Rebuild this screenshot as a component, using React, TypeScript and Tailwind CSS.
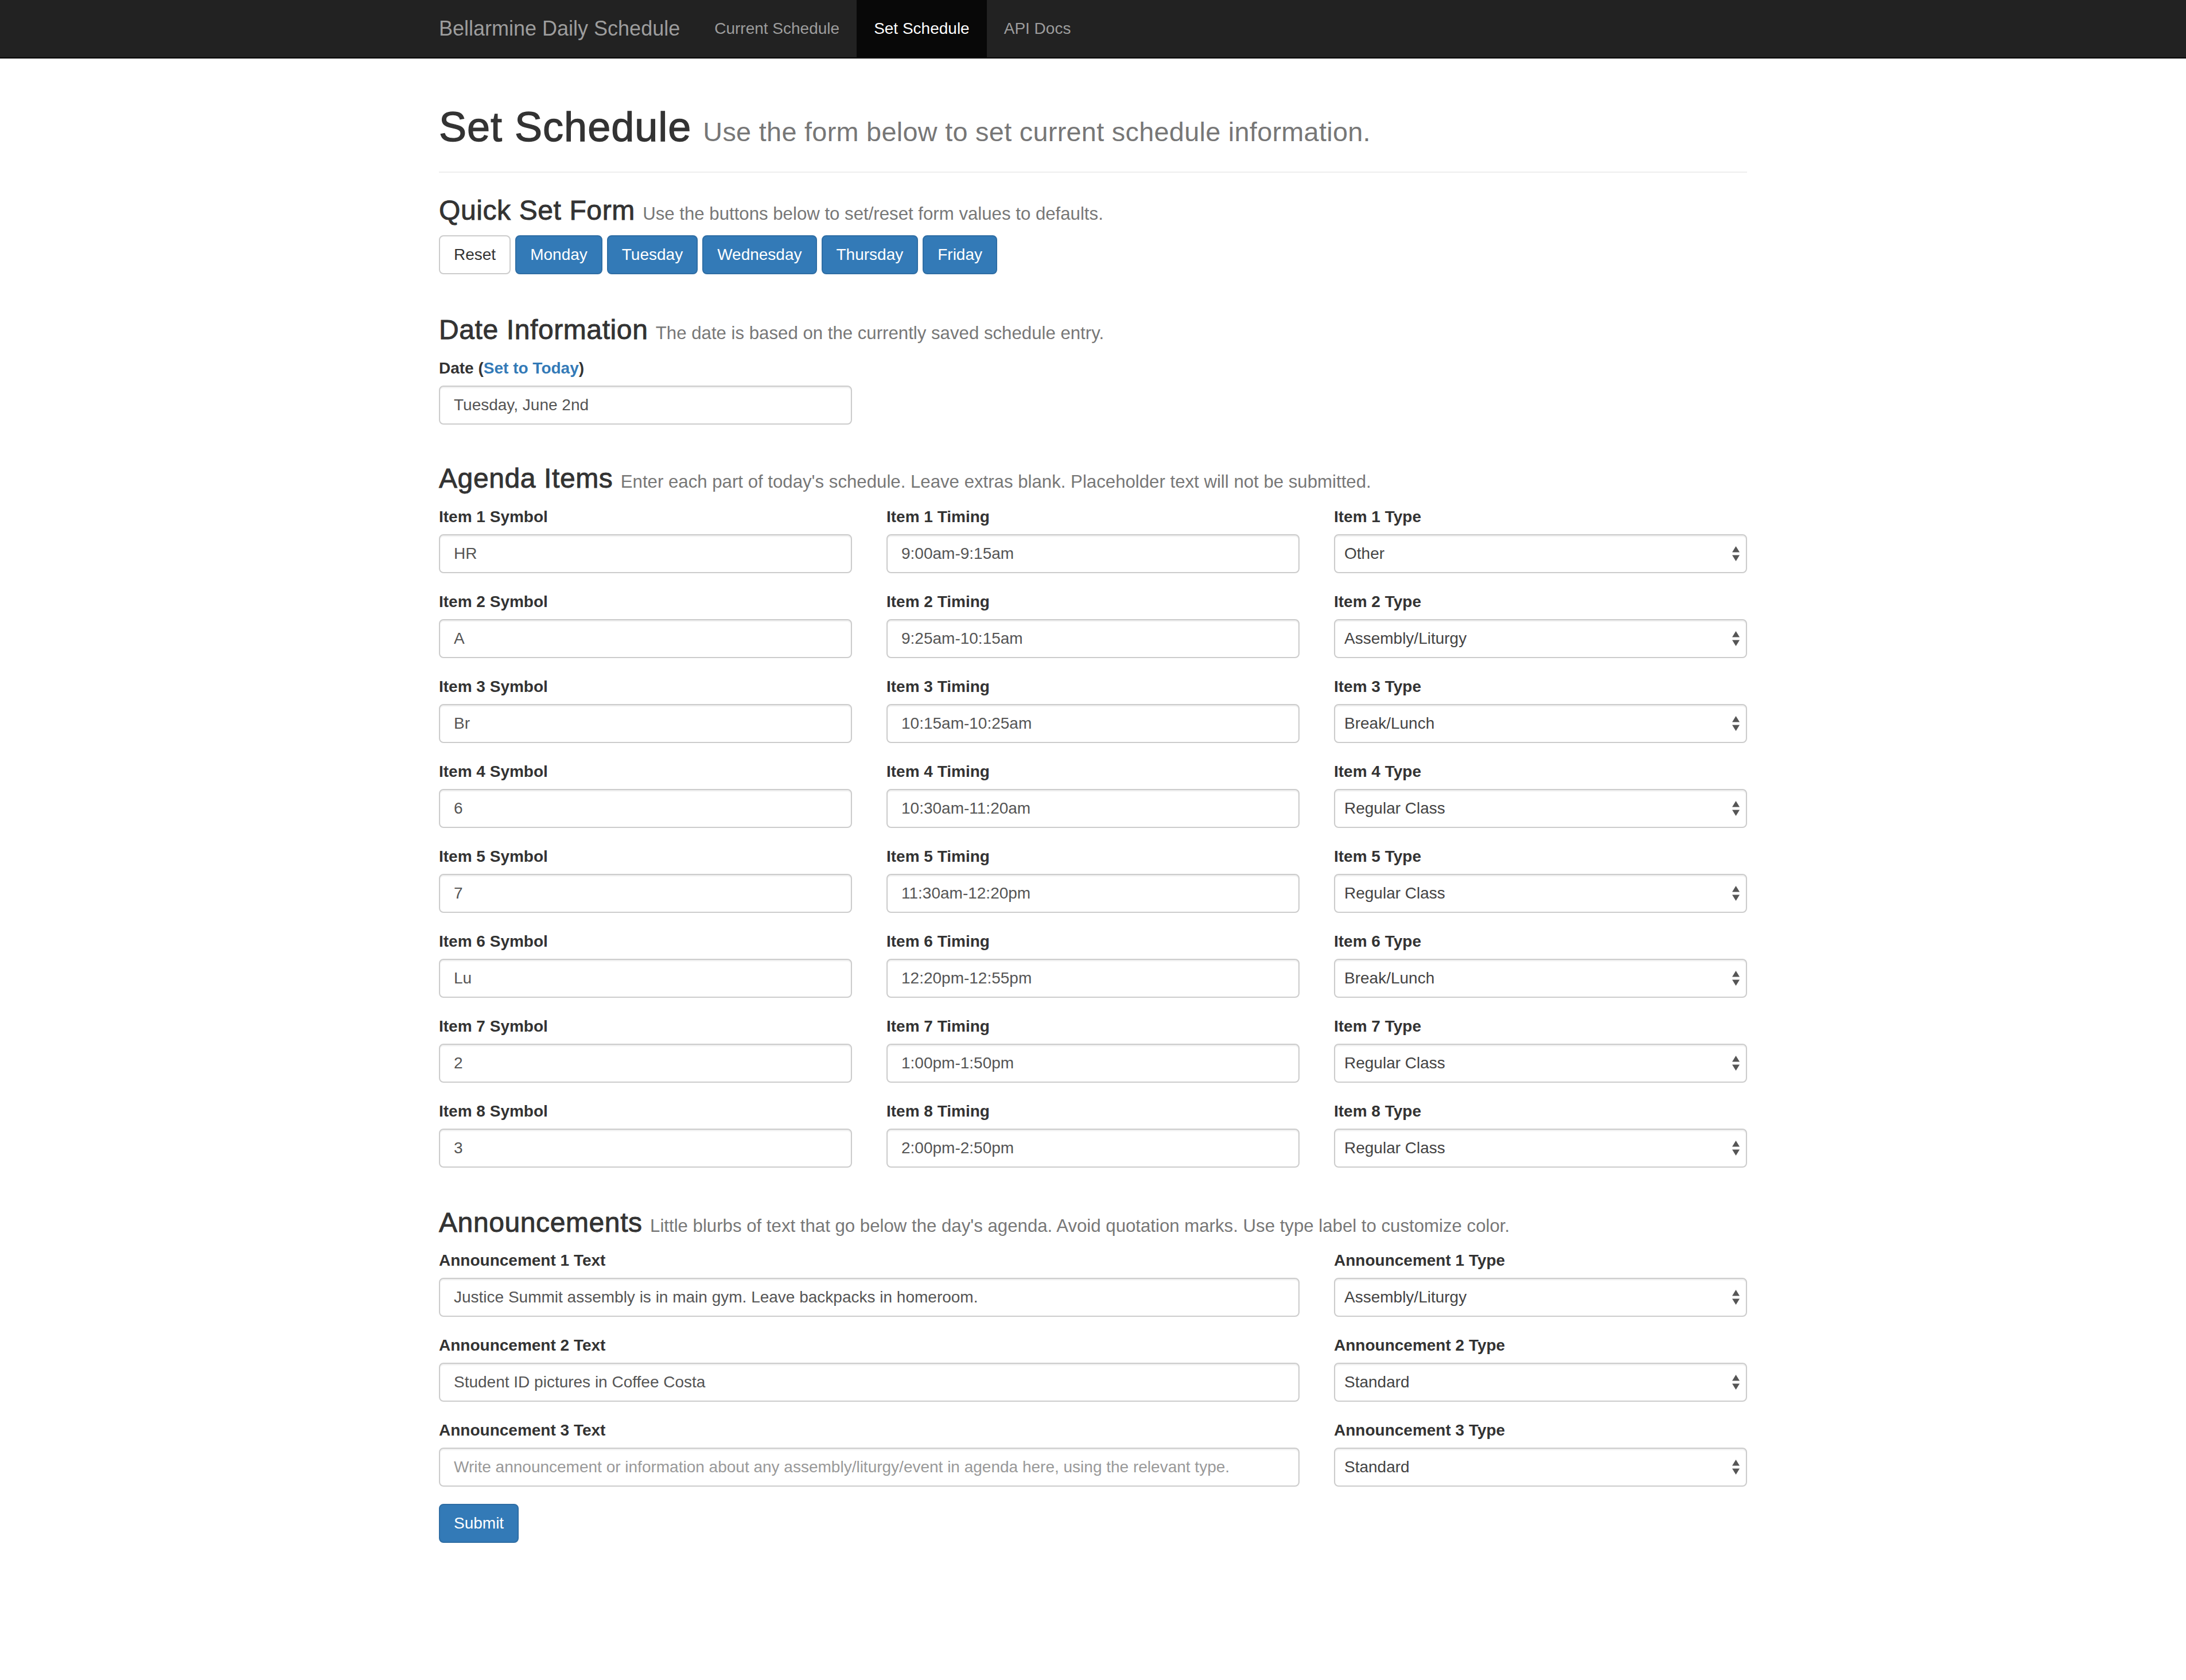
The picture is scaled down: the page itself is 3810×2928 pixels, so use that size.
import React from 'react';

const agendaItems = [
  { symbol: 'HR', timing: '9:00am-9:15am', type: 'Other' },
  { symbol: 'A', timing: '9:25am-10:15am', type: 'Assembly/Liturgy' },
  { symbol: 'Br', timing: '10:15am-10:25am', type: 'Break/Lunch' },
  { symbol: '6', timing: '10:30am-11:20am', type: 'Regular Class' },
  { symbol: '7', timing: '11:30am-12:20pm', type: 'Regular Class' },
  { symbol: 'Lu', timing: '12:20pm-12:55pm', type: 'Break/Lunch' },
  { symbol: '2', timing: '1:00pm-1:50pm', type: 'Regular Class' },
  { symbol: '3', timing: '2:00pm-2:50pm', type: 'Regular Class' },
];

const itemTypes = ['Regular Class', 'Break/Lunch', 'Assembly/Liturgy', 'Other'];
const announcementTypes = ['Standard', 'Assembly/Liturgy', 'Break/Lunch', 'Other'];

const announcements = [
  { text: 'Justice Summit assembly is in main gym. Leave backpacks in homeroom.', type: 'Assembly/Liturgy' },
  { text: 'Student ID pictures in Coffee Costa', type: 'Standard' },
  { text: '', type: 'Standard' },
];

const inputClass =
  'block w-full h-[68px] px-[24px] py-[12px] text-[28px] leading-[40px] text-[#555] bg-white border-2 border-[#ccc] rounded-[8px] shadow-[inset_0_2px_2px_rgba(0,0,0,0.075)] outline-none placeholder:text-[#999]';

const FieldLabel: React.FC<{ children: React.ReactNode }> = ({ children }) => (
  <label className="block mb-[10px] text-[28px] leading-[40px] font-bold text-[#333]">{children}</label>
);

const TextField: React.FC<{ label: React.ReactNode; value?: string; placeholder?: string }> = ({
  label,
  value,
  placeholder,
}) => (
  <div className="mb-[30px]">
    <FieldLabel>{label}</FieldLabel>
    <input type="text" defaultValue={value} placeholder={placeholder} className={inputClass} />
  </div>
);

const SelectField: React.FC<{ label: string; value: string; options: string[] }> = ({ label, value, options }) => (
  <div className="mb-[30px]">
    <FieldLabel>{label}</FieldLabel>
    <div className="relative">
      <select
        defaultValue={value}
        className="block w-full h-[68px] pl-[16px] pr-[40px] text-[28px] leading-[40px] text-[#444] bg-white border-2 border-[#ccc] rounded-[8px] shadow-[inset_0_2px_2px_rgba(0,0,0,0.075)] appearance-none outline-none"
      >
        {options.map(o => (
          <option key={o}>{o}</option>
        ))}
      </select>
      {/* up/down arrows */}
      <svg
        className="absolute right-[13px] top-1/2 -translate-y-1/2 pointer-events-none"
        width="13"
        height="26"
        viewBox="0 0 13 26"
      >
        <polygon points="0,10.5 6.5,0 13,10.5" fill="#555" />
        <polygon points="0,15.5 13,15.5 6.5,26" fill="#555" />
      </svg>
    </div>
  </div>
);

const SectionTitle: React.FC<{ title: string; note: string; className?: string }> = ({ title, note, className }) => (
  <h3 className={`text-[48px] leading-[1.1] font-medium text-[#333] mb-[20px] ${className ?? ''}`}>
    <span className="tracking-[0.6px] [-webkit-text-stroke:0.9px_#333]">{title}</span>{' '}
    <small className="text-[31.2px] leading-none font-normal text-[#777]">{note}</small>
  </h3>
);

export default function App() {
  const navLinks = [
    { label: 'Current Schedule', active: false },
    { label: 'Set Schedule', active: true },
    { label: 'API Docs', active: false },
  ];

  return (
    <div className="min-h-screen bg-white text-[28px] leading-[40px] text-[#333] font-['Liberation_Sans','Helvetica_Neue',Arial,sans-serif]">
      {/* Navbar */}
      <nav className="h-[102px] bg-[#222] border-b-2 border-[#080808]">
        <div className="mx-auto w-[2340px] px-[30px] flex h-[100px]">
          <a className="-ml-[30px] px-[30px] py-[30px] h-[100px] text-[36px] leading-[40px] text-[#9d9d9d]">
            Bellarmine Daily Schedule
          </a>
          <ul className="flex">
            {navLinks.map(link => (
              <li key={link.label}>
                <a
                  className={`block px-[30px] py-[30px] text-[28px] leading-[40px] ${
                    link.active ? 'bg-[#080808] text-white' : 'text-[#9d9d9d]'
                  }`}
                >
                  {link.label}
                </a>
              </li>
            ))}
          </ul>
        </div>
      </nav>

      <main className="mx-auto w-[2340px] px-[30px] flex flex-col">
        {/* Page header */}
        <div className="mt-[80px] pb-[18px] border-b-2 border-[#eee]">
          <h1 className="text-[72px] leading-[1.1] font-medium text-[#333] mb-[20px]">
            <span className="tracking-[1px] [-webkit-text-stroke:1.3px_#333]">Set Schedule</span>{' '}
            <small className="text-[46.8px] leading-none font-normal text-[#777] tracking-[0.3px]">
              Use the form below to set current schedule information.
            </small>
          </h1>
        </div>

        {/* Quick set */}
        <SectionTitle
          className="mt-[40px] !mb-[16px]"
          title="Quick Set Form"
          note="Use the buttons below to set/reset form values to defaults."
        />
        <div className="flex gap-[8px]">
          <button className="px-[24px] py-[12px] text-[28px] leading-[40px] bg-white text-[#333] border-2 border-[#ccc] rounded-[8px]">
            Reset
          </button>
          {['Monday', 'Tuesday', 'Wednesday', 'Thursday', 'Friday'].map(day => (
            <button
              key={day}
              className="px-[24px] py-[12px] text-[28px] leading-[40px] bg-[#337ab7] text-white border-2 border-[#2e6da4] rounded-[8px]"
            >
              {day}
            </button>
          ))}
        </div>

        {/* Date */}
        <SectionTitle
          className="mt-[71px]"
          title="Date Information"
          note="The date is based on the currently saved schedule entry."
        />
        <div className="grid grid-cols-3 gap-x-[60px]">
          <TextField
            label={
              <>
                Date (<a className="text-[#337ab7]">Set to Today</a>)
              </>
            }
            value="Tuesday, June 2nd"
          />
        </div>

        {/* Agenda */}
        <SectionTitle
          className="mt-[38px]"
          title="Agenda Items"
          note="Enter each part of today's schedule. Leave extras blank. Placeholder text will not be submitted."
        />
        <div className="grid grid-cols-3 gap-x-[60px]">
          {agendaItems.map((item, i) => (
            <React.Fragment key={i}>
              <TextField label={`Item ${i + 1} Symbol`} value={item.symbol} />
              <TextField label={`Item ${i + 1} Timing`} value={item.timing} />
              <SelectField label={`Item ${i + 1} Type`} value={item.type} options={itemTypes} />
            </React.Fragment>
          ))}
        </div>

        {/* Announcements */}
        <SectionTitle
          className="mt-[40px]"
          title="Announcements"
          note="Little blurbs of text that go below the day's agenda. Avoid quotation marks. Use type label to customize color."
        />
        <div className="grid grid-cols-3 gap-x-[60px]">
          {announcements.map((a, i) => (
            <React.Fragment key={i}>
              <div className="col-span-2">
                <TextField
                  label={`Announcement ${i + 1} Text`}
                  value={a.text || undefined}
                  placeholder="Write announcement or information about any assembly/liturgy/event in agenda here, using the relevant type."
                />
              </div>
              <SelectField label={`Announcement ${i + 1} Type`} value={a.type} options={announcementTypes} />
            </React.Fragment>
          ))}
        </div>

        <div>
          <button className="px-[24px] py-[12px] text-[28px] leading-[40px] bg-[#337ab7] text-white border-2 border-[#2e6da4] rounded-[8px]">
            Submit
          </button>
        </div>
      </main>
    </div>
  );
}
